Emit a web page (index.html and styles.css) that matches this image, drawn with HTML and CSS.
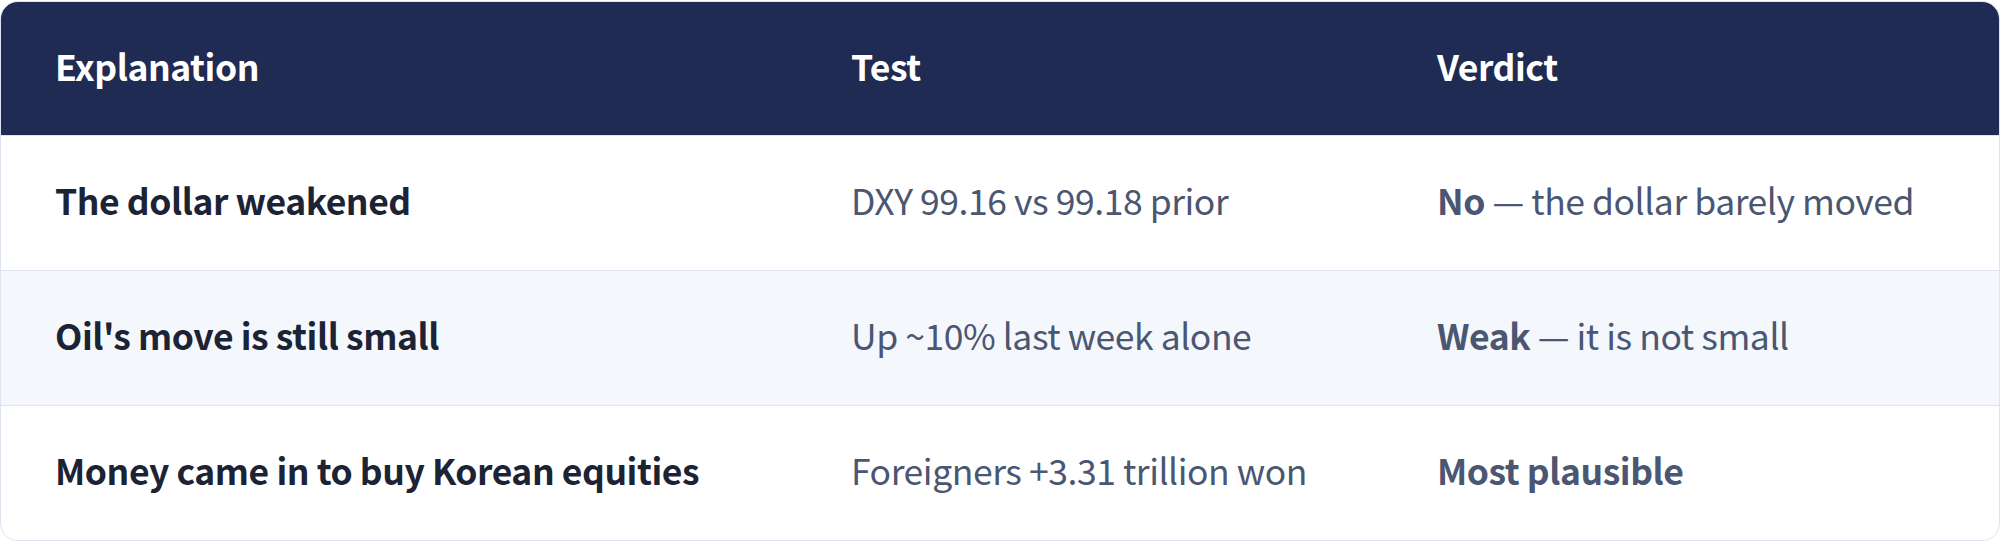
FILE: index.html
```html
<!DOCTYPE html>
<html lang="en">
<head>
<meta charset="utf-8">
<title>Explanations</title>
<link rel="stylesheet" href="styles.css">
</head>
<body>
<div class="card">
  <div class="row head">
    <div class="cell">Explanation</div>
    <div class="cell">Test</div>
    <div class="cell">Verdict</div>
  </div>
  <div class="row">
    <div class="cell name">The dollar weakened</div>
    <div class="cell">DXY 99.16 vs 99.18 prior</div>
    <div class="cell"><b>No</b> — the dollar barely moved</div>
  </div>
  <div class="row alt">
    <div class="cell name">Oil's move is still small</div>
    <div class="cell">Up ~10% last week alone</div>
    <div class="cell"><b>Weak</b> — it is not small</div>
  </div>
  <div class="row last">
    <div class="cell name">Money came in to buy Korean equities</div>
    <div class="cell">Foreigners +3.31 trillion won</div>
    <div class="cell"><b>Most plausible</b></div>
  </div>
</div>
</body>
</html>
```

FILE: styles.css
```css
html, body {
  margin: 0;
  padding: 0;
  background: #ffffff;
}
body {
  padding: 1px 0 1px 0;
  font-family: "Noto Sans CJK KR", "Noto Sans", sans-serif;
}
.card {
  border: 1px solid #dde3ef;
  border-radius: 18px;
  overflow: hidden;
  background: #ffffff;
}
.row {
  display: grid;
  grid-template-columns: 796px 586px 1fr;
  height: 134px;
  align-items: center;
  border-top: 1px solid #dde3ef;
  color: #4a5672;
  font-size: 35.5px;
  letter-spacing: -0.45px;
}
.row.head {
  border-top: none;
  height: 133px;
  background: #1f2b53;
  color: #ffffff;
  font-weight: 700;
}
.row.alt {
  background: #f4f7fc;
}
.cell {
  padding: 0 0 6px 54px;
  line-height: 1.2;
  white-space: nowrap;
}
.head .cell {
  padding-bottom: 4px;
}
.cell.name {
  color: #1b2335;
  font-weight: 700;
}
.cell b {
  font-weight: 700;
}
```
